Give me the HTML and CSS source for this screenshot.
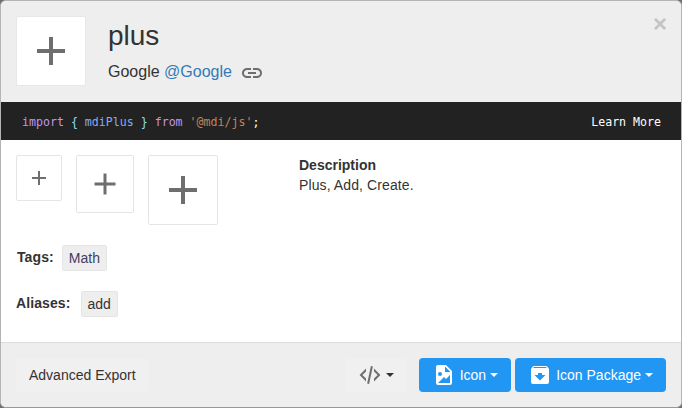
FILE: index.html
```html
<!DOCTYPE html>
<html lang="en">
<head>
<meta charset="utf-8">
<title>plus</title>
<link rel="stylesheet" href="styles.css">
</head>
<body>
<div class="modal">
  <header class="head">
    <div class="tile tile-70">
      <svg class="ic-48" viewBox="0 0 24 24"><path d="M19 13h-6v6h-2v-6H5v-2h6V5h2v6h6v2z"/></svg>
    </div>
    <div class="head-text">
      <h1 class="title">plus</h1>
      <div class="author"><span>Google&nbsp;</span><a class="link">@Google</a>
        <svg class="chain" viewBox="0 0 24 24"><path d="M3.9 12c0-1.71 1.39-3.1 3.1-3.1h4V7H7c-2.76 0-5 2.24-5 5s2.24 5 5 5h4v-1.9H7c-1.71 0-3.1-1.39-3.1-3.1zM8 13h8v-2H8v2zm9-6h-4v1.9h4c1.71 0 3.1 1.39 3.1 3.1s-1.39 3.1-3.1 3.1h-4V17h4c2.76 0 5-2.24 5-5s-2.24-5-5-5z"/></svg>
      </div>
    </div>
    <span class="close">×</span>
  </header>
  <div class="codebar">
    <code class="code"><span class="kw">import</span> <span class="br">{</span> <span class="id">mdiPlus</span> <span class="br">}</span> <span class="kw">from</span> <span class="str">'@mdi/js'</span><span class="semi">;</span></code>
    <a class="learn">Learn More</a>
  </div>
  <main class="body">
    <div class="top-row">
      <div class="previews">
        <div class="tile tile-46"><svg class="ic-24" viewBox="0 0 24 24"><path d="M19 13h-6v6h-2v-6H5v-2h6V5h2v6h6v2z"/></svg></div>
        <div class="tile tile-58"><svg class="ic-36" viewBox="0 0 24 24"><path d="M19 13h-6v6h-2v-6H5v-2h6V5h2v6h6v2z"/></svg></div>
        <div class="tile tile-70"><svg class="ic-48" viewBox="0 0 24 24"><path d="M19 13h-6v6h-2v-6H5v-2h6V5h2v6h6v2z"/></svg></div>
      </div>
      <div class="desc">
        <div class="desc-title">Description</div>
        <div class="desc-text">Plus, Add, Create.</div>
      </div>
    </div>
    <div class="meta meta-tags"><span class="meta-label">Tags:</span><span class="chip chip-tag">Math</span></div>
    <div class="meta meta-alias"><span class="meta-label">Aliases:</span><span class="chip">add</span></div>
  </main>
  <footer class="foot">
    <button class="btn btn-plain">Advanced Export</button>
    <div class="foot-right">
      <button class="btn btn-plain btn-code">
        <svg class="code-ic" viewBox="0 0 24 24"><path d="M12.89 3l1.96.4L11.11 21l-1.96-.4L12.89 3zm6.7 9L16 8.41V5.58L22.42 12 16 18.41v-2.83L19.59 12zM1.58 12L8 5.58v2.83L4.41 12 8 15.58v2.83L1.58 12z"/></svg>
        <span class="caret"></span>
      </button>
      <button class="btn btn-blue">
        <svg class="btn-ic" viewBox="0 0 24 24"><path fill-rule="evenodd" d="M6 2h8l6 6v12a2 2 0 0 1-2 2H6a2 2 0 0 1-2-2V4c0-1.11.89-2 2-2zm7 1.500V9h5.500zM6 20h12v-8l-4 4-2-2zM8 9a2 2 0 1 0 0 4 2 2 0 0 0 0-4z"/></svg>
        <span class="btn-label">Icon</span>
        <span class="caret"></span>
      </button>
      <button class="btn btn-blue">
        <svg class="btn-ic" viewBox="0 0 24 24"><path fill-rule="evenodd" d="M6 3h12c.47 0 .88.21 1.150.55l1.390 1.680c.29.340.46.770.46 1.270V19a2 2 0 0 1-2 2H5a2 2 0 0 1-2-2V6.500c0-.5.170-.93.460-1.270l1.380-1.680C5.120 3.210 5.530 3 6 3zm-.07 1l-.81 1h13.750l-.94-1zM12 17.500l5.500-5.500H14v-2h-4v2H6.500z"/></svg>
        <span class="btn-label">Icon Package</span>
        <span class="caret"></span>
      </button>
    </div>
  </footer>
</div>
</body>
</html>
```
FILE: styles.css
```css
* { box-sizing: border-box; }
html, body { margin: 0; height: 100%; }
body {
  background: #6e6e6e;
  font-family: "Liberation Sans", Arial, sans-serif;
  font-size: 14px;
  line-height: 20px;
  color: #333;
  overflow: hidden;
}
svg { display: block; flex: none; fill: currentColor; }
.modal {
  width: 682px;
  height: 408px;
  display: flex;
  flex-direction: column;
  background: #fff;
  border: 1px solid #b4b4b4;
  border-bottom-color: #999;
  border-radius: 6px;
  overflow: hidden;
}
.head {
  height: 101px;
  flex: none;
  position: relative;
  display: flex;
  gap: 22px;
  padding: 15px;
  background: #eee;
}
.tile {
  flex: none;
  display: flex;
  align-items: center;
  justify-content: center;
  background: #fff;
  border: 1px solid #e5e5e5;
  border-radius: 2px;
  color: #6e6e6e;
}
.head .tile { border-color: #e8e8e8; }
.tile-46 { width: 46px; height: 46px; }
.tile-58 { width: 58px; height: 58px; }
.tile-70 { width: 70px; height: 70px; }
.ic-24 { width: 24px; height: 24px; }
.ic-36 { width: 36px; height: 36px; }
.ic-48 { width: 48px; height: 48px; }
.title {
  margin: 2px 0 0;
  font-size: 28px;
  font-weight: 400;
  line-height: 36px;
  color: #333;
}
.author {
  margin-top: 5px;
  display: flex;
  align-items: center;
  font-size: 16px;
  line-height: 22px;
}
.link { color: #337ab7; }
.chain { width: 24px; height: 24px; margin: 2px 0 0 8px; color: #6e6e6e; }
.close {
  position: absolute;
  top: 11px;
  right: 14px;
  font-size: 24px;
  font-weight: 700;
  line-height: 24px;
  color: #c4c4c4;
}
.codebar {
  height: 38px;
  flex: none;
  display: flex;
  align-items: center;
  justify-content: space-between;
  padding: 1px 20px 0 21px;
  background: #222;
  font-family: "DejaVu Sans Mono", monospace;
  font-size: 11.6px;
}
.code { font: inherit; white-space: pre; color: #fff; }
.kw { color: #c792ea; }
.br { color: #89ddff; }
.id { color: #82aaff; }
.str { color: #c3835a; }
.semi { color: #fff; }
.learn { color: #fff; }
.body {
  flex: 1;
  padding: 15px;
}
.top-row { display: flex; align-items: flex-start; height: 70px; }
.previews { display: flex; align-items: flex-start; gap: 14px; width: 283px; flex: none; }
.desc-title { font-weight: 700; line-height: 20px; }
.desc-text { line-height: 20px; letter-spacing: .1px; }
.meta { display: flex; align-items: center; }
.meta-tags { margin-top: 20px; height: 26px; }
.meta-alias { margin-top: 20px; height: 26px; }
.meta-label {
  font-weight: 700;
  margin-right: 10px;
  padding-bottom: 3px;
  letter-spacing: .1px;
}
.meta-tags .meta-label { margin: 0 9px 0 1px; }
.chip {
  display: block;
  height: 26px;
  padding: 0 6px;
  background: #eee;
  border: 1px solid #e5e5e5;
  border-radius: 2px;
  line-height: 24px;
  color: #333;
}
.chip-tag { color: #453c5c; }
.meta-tags .chip { margin-left: -1px; }
.foot {
  flex: none;
  height: 65px;
  display: flex;
  align-items: center;
  justify-content: space-between;
  padding: 0 15px;
  background: #eee;
  border-top: 1px solid #ddd;
}
.foot-right { display: flex; gap: 4px; align-items: center; }
.btn {
  display: flex;
  align-items: center;
  height: 34px;
  padding: 0 13px;
  border: 0;
  border-radius: 4px;
  font: inherit;
  color: #333;
}
.btn-plain { background: #f0f0f0; }
.btn-code { margin-right: 8px; color: #6e6e6e; }
.code-ic { width: 24px; height: 24px; }
.caret {
  display: inline-block;
  width: 0;
  height: 0;
  margin-left: 4px;
  border-top: 4px solid #333;
  border-left: 4px solid transparent;
  border-right: 4px solid transparent;
}
.btn-blue { background: #2196f3; color: #fff; }
.btn-blue .caret { border-top-color: #fff; }
.btn-ic { width: 24px; height: 24px; margin-right: 4px; }
```
